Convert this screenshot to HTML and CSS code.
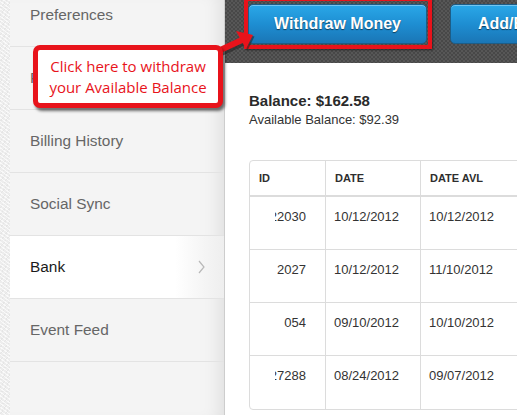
FILE: index.html
```html
<!DOCTYPE html>
<html>
<head>
<meta charset="utf-8">
<link rel="stylesheet" href="styles.css">
</head>
<body>
<div class="app">
  <div class="texture"></div>
  <aside class="sidebar">
    <ul class="nav">
      <li class="nav-item">Preferences</li>
      <li class="nav-item">Payment Info</li>
      <li class="nav-item">Billing History</li>
      <li class="nav-item">Social Sync</li>
      <li class="nav-item active">Bank
        <svg class="chev" width="7" height="14" viewBox="0 0 7 14"><path d="M1 1 L6 7 L1 13" fill="none" stroke="#b8b8b8" stroke-width="1.2"/></svg>
      </li>
      <li class="nav-item">Event Feed</li>
    </ul>
  </aside>
  <main class="main">
    <div class="toolbar">
      <button class="btn btn-withdraw">Withdraw Money</button>
      <button class="btn btn-add">Add/Edit Bank</button>
    </div>
    <section class="summary">
      <div class="balance">Balance: $162.58</div>
      <div class="available">Available Balance: $92.39</div>
    </section>
    <table class="ledger">
      <thead>
        <tr><th class="c-id">ID</th><th class="c-date">DATE</th><th class="c-avl">DATE AVL</th><th class="c-more">AMOUNT</th></tr>
      </thead>
      <tbody>
        <tr><td class="c-id"><div class="clip"><span>22030</span></div></td><td>10/12/2012</td><td>10/12/2012</td><td>$20.00</td></tr>
        <tr><td class="c-id"><div class="clip"><span>2027</span></div></td><td>10/12/2012</td><td>11/10/2012</td><td>$15.00</td></tr>
        <tr><td class="c-id"><div class="clip"><span>054</span></div></td><td>09/10/2012</td><td>10/10/2012</td><td>$30.00</td></tr>
        <tr><td class="c-id"><div class="clip"><span>27288</span></div></td><td>08/24/2012</td><td>09/07/2012</td><td>$12.00</td></tr>
      </tbody>
    </table>
  </main>
</div>
<div class="highlight"></div>
<svg class="arrow" width="50" height="45" viewBox="0 0 50 45">
  <g transform="translate(1.5,1.5)" opacity="0.55">
    <line x1="6" y1="32" x2="32" y2="20" stroke="#222" stroke-width="8"/>
    <polygon points="43,15 26,11 36,29" fill="#222"/>
  </g>
  <line x1="6" y1="32" x2="32" y2="20" stroke="#e8131b" stroke-width="6"/>
  <polygon points="43,15 26,11 36,29" fill="#e8131b"/>
</svg>
<div class="callout">Click here to withdraw<br>your Available Balance</div>
</body>
</html>
```
FILE: styles.css
```css
* { box-sizing: border-box; }
html, body { margin: 0; padding: 0; }
body {
  width: 517px;
  height: 415px;
  overflow: hidden;
  position: relative;
  font-family: "Liberation Sans", Arial, sans-serif;
  background: #fff;
}
.app {
  display: flex;
  height: 415px;
}
.texture {
  width: 10px;
  flex-shrink: 0;
  background-color: #ededed;
  background-image:
    repeating-linear-gradient(37deg, rgba(255,255,255,0.7) 0 1px, transparent 1px 3px),
    repeating-linear-gradient(-53deg, rgba(0,0,0,0.035) 0 1px, transparent 1px 4px);
}
.sidebar {
  width: 215px;
  flex-shrink: 0;
  background: #f4f4f4;
  border-right: 1px solid #cdcdcd;
  box-shadow: inset -16px 0 16px -10px rgba(0,0,0,0.08);
  overflow: hidden;
}
.nav {
  list-style: none;
  margin: -16px 0 0;
  padding: 0;
}
.nav-item {
  height: 63px;
  border-bottom: 1px solid #e3e3e3;
  display: flex;
  align-items: center;
  justify-content: space-between;
  padding: 0 19px 0 20px;
  font-size: 15.4px;
  color: #666;
}
.nav-item.active {
  background: linear-gradient(to right, #fff 0, #fff 165px, #eeeeee 214px);
  color: #1a1a1a;
}
.chev { display: block; }
.main {
  flex: 1;
  min-width: 0;
  overflow: hidden;
  background: #fff;
}
.toolbar {
  height: 63px;
  display: flex;
  align-items: flex-start;
  gap: 23px;
  padding: 4px 0 0 23px;
  background-color: #4f4f4f;
  background-image: repeating-conic-gradient(#575757 0 25%, #484848 0 50%);
  background-size: 4px 4px;
}
.btn {
  flex-shrink: 0;
  height: 40px;
  border: 1px solid #1d5d87;
  border-radius: 5px;
  background: linear-gradient(#2aa8e8, #1e8ed2 50%, #1a76b6);
  box-shadow: inset 0 1px 0 rgba(255,255,255,0.35);
  color: #fff;
  font-family: "Liberation Sans", Arial, sans-serif;
  font-weight: bold;
  font-size: 16px;
  text-shadow: 0 1px 1px rgba(0,0,0,0.55);
  padding: 0;
}
.btn-withdraw { width: 179px; }
.btn-add { width: 150px; text-align: left; padding-left: 27px; }
.summary {
  padding: 29px 0 0 24px;
}
.balance {
  font-weight: bold;
  font-size: 15px;
  color: #2a2a2a;
  line-height: 18px;
}
.available {
  font-size: 13px;
  color: #333;
  line-height: 16px;
  margin-top: 2px;
}
.ledger {
  margin: 32px 0 0 24px;
  border-collapse: separate;
  border-spacing: 0;
  border: 1px solid #dcdcdc;
  border-radius: 4px;
  width: 420px;
  table-layout: fixed;
}
.ledger th, .ledger td {
  text-align: left;
  vertical-align: top;
  border-right: 1px solid #dcdcdc;
  color: #333;
}
.ledger th {
  height: 36px;
  vertical-align: middle;
  font-size: 11px;
  font-weight: bold;
  padding: 0 9px;
  border-bottom: 2px solid #dcdcdc;
  color: #2e2e2e;
}
.ledger td {
  height: 53px;
  font-size: 13px;
  padding: 12px 9px 0 8px;
  border-bottom: 1px solid #dcdcdc;
}
.ledger tbody tr:last-child td { border-bottom: none; }
.c-id { width: 76px; }
.c-date { width: 95px; }
.c-avl { width: 130px; }
.ledger td.c-id { padding-right: 19px; padding-left: 0; }
.clip {
  display: flex;
  justify-content: flex-end;
  overflow: hidden;
  margin-left: 25px;
  white-space: nowrap;
}
.highlight {
  position: absolute;
  left: 244px;
  top: -3px;
  width: 188px;
  height: 52px;
  border: 4px solid #e8131b;
  box-shadow: 1px 1px 2px rgba(0,0,0,0.5);
}
.arrow {
  position: absolute;
  left: 210px;
  top: 20px;
}
.callout {
  position: absolute;
  left: 33px;
  top: 45px;
  width: 190px;
  height: 63px;
  border: 5px solid #e8131b;
  border-radius: 7px;
  background: #fff;
  box-shadow: 2px 3px 3px rgba(0,0,0,0.55);
  color: #e8131b;
  font-family: "Open Sans", "Noto Sans", sans-serif;
  font-size: 15px;
  line-height: 21px;
  text-align: center;
  padding-top: 6px;
  white-space: nowrap;
}
```
